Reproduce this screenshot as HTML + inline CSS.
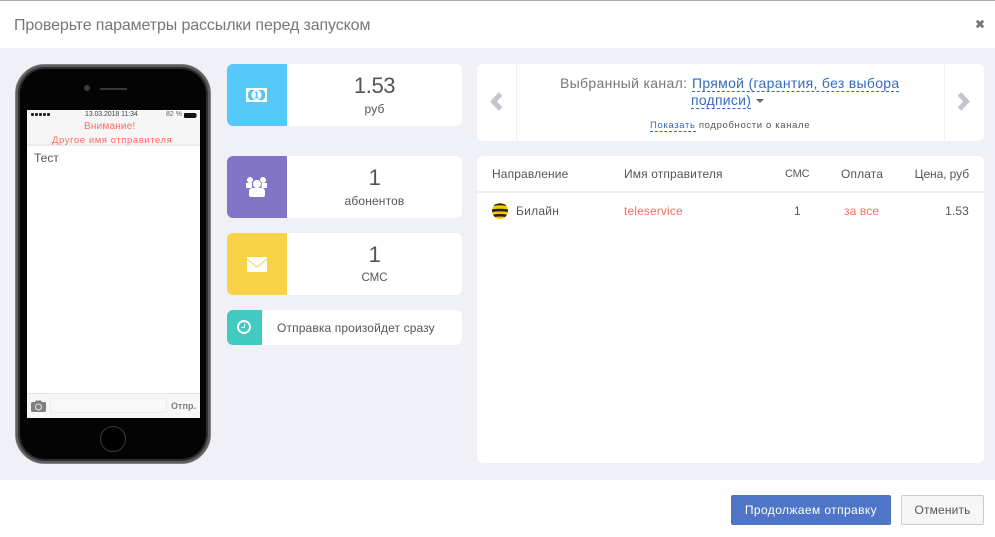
<!DOCTYPE html>
<html lang="ru"><head><meta charset="utf-8"><title>Проверьте параметры</title>
<style>
*{box-sizing:border-box}
html,body{margin:0;padding:0;width:995px;height:537px;overflow:hidden;background:#fff}
body{position:relative;font-family:"Liberation Sans",Arial,sans-serif;color:#555}
.a{position:absolute;white-space:nowrap}
.c{text-align:center}
.card{position:absolute;background:#fff;border-radius:6px;overflow:hidden;left:227px;width:235px}
.ic{position:absolute;left:0;top:0;bottom:0;width:60px}
.big{position:absolute;left:60px;right:0;text-align:center;font-size:22px;line-height:28px;top:8px;letter-spacing:-.4px;color:#555}
.sm{position:absolute;left:60px;right:0;text-align:center;font-size:12px;line-height:14px;top:38px;letter-spacing:.15px;color:#555}
.th,.td{position:absolute;font-size:12px;line-height:14px;white-space:nowrap;letter-spacing:.13px;color:#555}
.red{color:#ff6a5f}
.link{color:#3469c0;border-bottom:1px dashed #3469c0}
</style></head><body>
<div class="a" style="left:0;top:0;width:995px;height:1px;background:#aaa"></div>
<div class="a" style="left:14px;top:16px;font-size:16px;line-height:20px;letter-spacing:-.12px;color:#777">Проверьте параметры рассылки перед запуском</div>
<svg class="a" style="left:975px;top:19px" width="10" height="10" viewBox="0 0 10 10"><path d="M1.8 1.8L8.2 8.2M8.2 1.8L1.8 8.2" stroke="#777" stroke-width="2.8"/></svg>
<div class="a" style="left:0;top:48px;width:995px;height:432px;background:#f0f1f6"></div>

<!-- phone -->
<div class="a" style="left:15px;top:64px;width:196px;height:400px;border-radius:30px;background:#040405;border:1px solid #808082;box-shadow:inset 0 0 0 2px #5e5e60,inset 0 0 0 4px #2e2e30"></div>
<div class="a" style="left:84px;top:85px;width:6px;height:6px;border-radius:50%;background:#3a3a3c"></div>
<div class="a" style="left:100px;top:88px;width:27px;height:2px;background:#38383a"></div>
<div class="a" style="left:27px;top:110px;width:173px;height:308px;background:#fff"></div>
<div class="a" style="left:27px;top:110px;width:173px;height:36px;background:#f6f6f6;border-bottom:2px solid #ececec"></div>
<div class="a" style="left:31px;top:113px;width:19px;height:3px;background:radial-gradient(circle at 1.5px 1.5px,#222 1.5px,transparent 1.6px) 0 0/4px 3px"></div>
<div class="a" style="left:85px;top:110px;font-size:7px;line-height:9px;letter-spacing:-.08px;color:#444">13.03.2018 11:34</div>
<div class="a" style="left:166px;top:110px;font-size:7px;line-height:9px;color:#666">82 %</div>
<div class="a" style="left:184px;top:113px;width:12px;height:5px;background:#111;border-radius:1px"></div>
<div class="a" style="left:196px;top:114px;width:1px;height:3px;background:#777"></div>
<div class="a" style="left:84px;top:120px;font-size:10px;line-height:13px;letter-spacing:.2px;color:#ff6a5f">Внимание!</div>
<div class="a" style="left:52px;top:134px;font-size:9.5px;line-height:13px;letter-spacing:.57px;color:#ff6a5f">Другое имя отправителя</div>
<div class="a" style="left:34px;top:151px;font-size:12px;line-height:14px;color:#555">Тест</div>
<div class="a" style="left:27px;top:393px;width:173px;height:25px;background:#f7f7f7;border-top:1px solid #e4e4e4"></div>
<svg class="a" style="left:31px;top:400px" width="15" height="12" viewBox="0 0 15 12"><path d="M0 3.5Q0 2 1.5 2H4L5 .5H10L11 2H13.5Q15 2 15 3.5V10.5Q15 12 13.5 12H1.5Q0 12 0 10.5Z" fill="#808080"/><circle cx="7.5" cy="7" r="3" fill="none" stroke="#e4e4e4" stroke-width="1"/></svg>
<div class="a" style="left:50px;top:398px;width:117px;height:15px;background:#f8f8f8;border:1px solid #ececec;border-radius:2px"></div>
<div class="a" style="left:171px;top:400px;font-size:9px;line-height:12px;font-weight:bold;letter-spacing:.05px;color:#808080">Отпр.</div>
<div class="a" style="left:100px;top:426px;width:26px;height:26px;border-radius:50%;background:#000;border:1px solid #3a3a3a"></div>

<!-- cards -->
<div class="card" style="top:64px;height:62px"><div class="ic" style="background:#56c8f7"></div>
<svg class="a" style="left:19px;top:24px" width="21" height="14" viewBox="0 0 21 14"><path fill="#fff" d="M0 0H21V14H0Z"/><path fill="#56c8f7" d="M4 2H17L19 4.5V9.5L17 12H4L2 9.5V4.5Z"/><circle cx="10.5" cy="7" r="5" fill="#fff"/><path d="M9 3.6H11.5V9.4H12.8V10.4H8.4V9.4H9.7V5H9Z" fill="#56c8f7"/></svg>
<div class="big">1.53</div><div class="sm">руб</div></div>

<div class="card" style="top:156px;height:62px"><div class="ic" style="background:#8375c5"></div>
<svg class="a" style="left:19px;top:20px" width="22" height="22" viewBox="0 0 22 22" fill="#fff"><circle cx="4" cy="4" r="3"/><circle cx="17" cy="4" r="3"/><path d="M0 7H6V12H0ZM15.5 7H21V12H15.5Z"/><circle cx="11" cy="8" r="4.5" stroke="#8375c5" stroke-width=".8"/><path d="M3 15.5Q3 12 6.5 12H15.5Q19 12 19 15.5V19Q19 21 17 21H5Q3 21 3 19Z"/></svg>
<div class="big">1</div><div class="sm">абонентов</div></div>

<div class="card" style="top:233px;height:62px"><div class="ic" style="background:#f8d347"></div>
<svg class="a" style="left:20px;top:24px" width="20" height="15" viewBox="0 0 20 15"><path d="M0 0H20V15H0Z" fill="#fff"/><path d="M0 2L8.5 9Q10 10.2 11.5 9L20 2" fill="none" stroke="#f8d347" stroke-width="1"/></svg>
<div class="big">1</div><div class="sm" style="font-size:11.5px;letter-spacing:0">СМС</div></div>

<div class="card" style="top:310px;height:35px"><div class="ic" style="background:#41cac0;width:35px"></div>
<svg class="a" style="left:10px;top:10px" width="15" height="15" viewBox="0 0 15 15"><circle cx="7" cy="7" r="6" fill="none" stroke="#fff" stroke-width="1.9"/><path d="M7.5 3.5V7.5H4.5" fill="none" stroke="#fff" stroke-width="1"/></svg>
<div class="a" style="left:50px;top:11px;font-size:12px;line-height:14px;letter-spacing:.13px;color:#555">Отправка произойдет сразу</div></div>

<!-- channel -->
<div class="a" style="left:477px;top:64px;width:507px;height:77px;background:#fff;border-radius:6px"></div>
<div class="a" style="left:516px;top:64px;width:1px;height:77px;background:#eeeff4"></div>
<div class="a" style="left:944px;top:64px;width:1px;height:77px;background:#eeeff4"></div>
<svg class="a" style="left:489px;top:92px" width="14" height="19" viewBox="0 0 14 19"><path d="M11.5 2L4.5 9.5L11.5 17" fill="none" stroke="#c2c4ce" stroke-width="5"/></svg>
<svg class="a" style="left:957px;top:92px" width="14" height="19" viewBox="0 0 14 19"><path d="M2.5 2L9.5 9.5L2.5 17" fill="none" stroke="#c2c4ce" stroke-width="5"/></svg>
<div class="a" style="left:560px;top:75px;font-size:14px;line-height:17px;letter-spacing:.33px;color:#777">Выбранный канал:</div>
<div class="a link" style="left:692px;top:75px;font-size:14px;line-height:16px;letter-spacing:.3px">Прямой (гарантия, без выбора</div>
<div class="a link" style="left:691px;top:92px;font-size:14px;line-height:16px;letter-spacing:.25px">подписи)</div>
<div class="a" style="left:756px;top:99px;width:0;height:0;border:4px solid transparent;border-top-color:#666;border-bottom:0"></div>
<div class="a" style="left:650px;top:120px;font-size:9.5px;line-height:11px;letter-spacing:.65px;color:#555"><span class="link">Показать</span> подробности о канале</div>

<!-- table -->
<div class="a" style="left:477px;top:156px;width:507px;height:307px;background:#fff;border-radius:6px"></div>
<div class="a" style="left:477px;top:191px;width:507px;height:2px;background:#f0f1f6"></div>
<div class="th" style="left:492px;top:167px">Направление</div>
<div class="th" style="left:624px;top:167px">Имя отправителя</div>
<div class="th" style="left:785px;top:167px;font-size:11px;letter-spacing:-.2px">СМС</div>
<div class="th" style="left:841px;top:167px">Оплата</div>
<div class="th" style="right:26px;top:167px;letter-spacing:-.08px">Цена, руб</div>
<svg class="a" style="left:492px;top:203px" width="16" height="16" viewBox="0 0 16 16"><circle cx="8" cy="8" r="8" fill="#f5c800"/><path d="M3 1.4Q8 -.5 13 1.4L14.5 3Q8 1.6 1.5 3ZM.2 6.4Q8 5 15.8 6.4L16 9Q8 7.8 0 9ZM1.2 11.6Q8 10.4 14.8 11.6L13.4 14Q8 13 2.6 14Z" fill="#222"/></svg>
<div class="td" style="left:516px;top:204px;letter-spacing:.25px">Билайн</div>
<div class="td red" style="left:624px;top:204px">teleservice</div>
<div class="td" style="left:794px;top:204px">1</div>
<div class="td red" style="left:844px;top:204px">за все</div>
<div class="td" style="right:26px;top:204px">1.53</div>

<!-- footer -->
<div class="a c" style="left:731px;top:495px;width:160px;height:30px;background:#4f75c6;border-radius:2px;color:#fff;font-size:12px;line-height:30px;letter-spacing:.4px">Продолжаем отправку</div>
<div class="a c" style="left:901px;top:495px;width:83px;height:30px;background:#f6f6f6;border:1px solid #ccc;border-radius:2px;color:#555;font-size:12px;line-height:28px;letter-spacing:.15px">Отменить</div>
</body></html>
